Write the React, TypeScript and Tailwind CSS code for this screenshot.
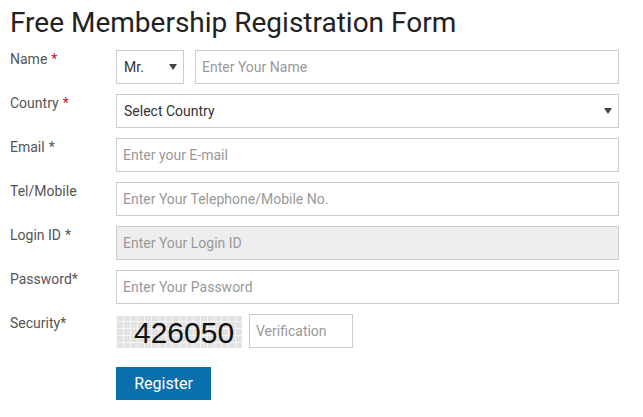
import React from 'react';

const font = { fontFamily: 'Roboto, "Noto Sans", Arial, sans-serif' };

function Caret() {
    return (
        <svg width="8" height="6" viewBox="0 0 8 6" className="shrink-0">
            <path d="M0 0H8L4 6Z" fill="#444" />
        </svg>
    );
}

function Label({ text, star, red }: { text: string; star?: boolean; red?: boolean }) {
    return (
        <div className="-mt-[1px] w-[106px] shrink-0 text-[14px] leading-5 text-[#555]">
            {text}
            {star && <span className={red ? 'ml-1 text-[#c8102e]' : 'ml-1'}>*</span>}
        </div>
    );
}

function Field({ placeholder, disabled }: { placeholder: string; disabled?: boolean }) {
    return (
        <div
            className={`flex h-[34px] w-[503px] items-center border border-[#ccc] px-[6px] text-[14px] text-[#999] ${
                disabled ? 'bg-[#eee]' : 'bg-white'
            }`}
        >
            {placeholder}
        </div>
    );
}

function Captcha() {
    const cells = [];
    for (let y = 0; y < 5; y++) {
        for (let x = 0; x < 18; x++) {
            cells.push(<rect key={`${x}-${y}`} x={x * 7 + 1} y={y * 7 - 1} width="6" height="6" fill="#e2e2e2" />);
        }
    }
    return (
        <svg width="126" height="32" viewBox="0 0 126 32" className="shrink-0">
            <rect width="126" height="32" fill="#f5f5f5" />
            {cells}
            <text
                x="18"
                y="27"
                fontSize="30"
                fill="#111"
                style={{ fontFamily: '"Liberation Sans", Arial, sans-serif' }}
            >
                426050
            </text>
        </svg>
    );
}

export default function App() {
    return (
        <div className="min-h-[417px] w-[643px] bg-white pl-[10px] pt-[6px]" style={font}>
            <h1 className="text-[28px] font-normal leading-[34px] text-[#222]">Free Membership Registration Form</h1>

            <div className="mt-[10px] flex flex-col gap-[10px]">
                <div className="flex items-start">
                    <Label text="Name" star red />
                    <div className="flex gap-[11px]">
                        <div className="flex h-[34px] w-[68px] items-center justify-between border border-[#ccc] bg-white pl-[7px] pr-[6px] text-[14px] text-[#333]">
                            Mr.
                            <Caret />
                        </div>
                        <div className="flex h-[34px] w-[424px] items-center border border-[#ccc] bg-white px-[6px] text-[14px] text-[#999]">
                            Enter Your Name
                        </div>
                    </div>
                </div>

                <div className="flex items-start">
                    <Label text="Country" star red />
                    <div className="flex h-[34px] w-[503px] items-center justify-between border border-[#ccc] bg-white pl-[7px] pr-[6px] text-[14px] text-[#333]">
                        Select Country
                        <Caret />
                    </div>
                </div>

                <div className="flex items-start">
                    <Label text="Email" star />
                    <Field placeholder="Enter your E-mail" />
                </div>

                <div className="flex items-start">
                    <Label text="Tel/Mobile" />
                    <Field placeholder="Enter Your Telephone/Mobile No." />
                </div>

                <div className="flex items-start">
                    <Label text="Login ID" star />
                    <Field placeholder="Enter Your Login ID" disabled />
                </div>

                <div className="flex items-start">
                    <Label text="Password*" />
                    <Field placeholder="Enter Your Password" />
                </div>

                <div className="flex items-start">
                    <Label text="Security*" />
                    <div className="flex items-center gap-[7px]">
                        <div className="pt-[1px]">
                            <Captcha />
                        </div>
                        <div className="flex h-[34px] w-[104px] items-center border border-[#ccc] bg-white px-[6px] text-[14px] text-[#999]">
                            Verification
                        </div>
                    </div>
                </div>
            </div>

            <div className="mt-[19px] pl-[106px]">
                <button className="h-[33px] w-[95px] bg-[#0a6fad] text-[16px] text-white">Register</button>
            </div>
        </div>
    );
}
